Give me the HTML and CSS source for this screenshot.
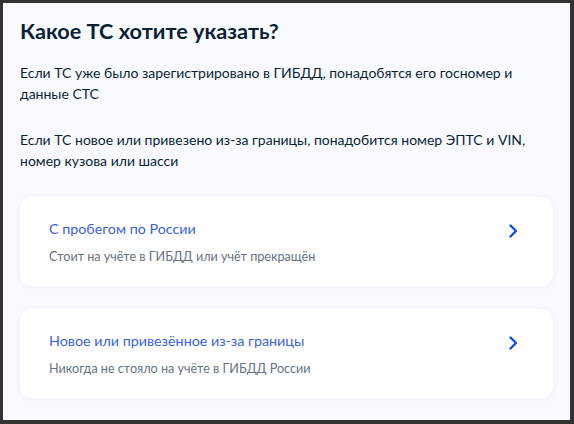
FILE: index.html
```html
<!DOCTYPE html>
<html lang="ru">
<head>
<meta charset="utf-8">
<link rel="stylesheet" href="styles.css">
</head>
<body>
<div class="frame">
  <h1 class="title">Какое ТС хотите указать?</h1>
  <p class="text">Если ТС уже было зарегистрировано в ГИБДД, понадобятся его госномер и данные СТС</p>
  <p class="text second">Если ТС новое или привезено из-за границы, понадобится номер ЭПТС и VIN, номер кузова или шасси</p>
  <div class="cards">
    <a class="card" href="#">
      <div class="card-body">
        <div class="card-title">С пробегом по России</div>
        <div class="card-sub">Стоит на учёте в ГИБДД или учёт прекращён</div>
      </div>
      <svg class="chev" width="10" height="16" viewBox="0 0 10 16"><path d="M2.5 2.5l5.5 5.5-5.5 5.5" fill="none" stroke="#0d4cd3" stroke-width="2.4" stroke-linecap="round" stroke-linejoin="round"/></svg>
    </a>
    <a class="card" href="#">
      <div class="card-body">
        <div class="card-title">Новое или привезённое из-за границы</div>
        <div class="card-sub">Никогда не стояло на учёте в ГИБДД России</div>
      </div>
      <svg class="chev" width="10" height="16" viewBox="0 0 10 16"><path d="M2.5 2.5l5.5 5.5-5.5 5.5" fill="none" stroke="#0d4cd3" stroke-width="2.4" stroke-linecap="round" stroke-linejoin="round"/></svg>
    </a>
  </div>
</div>
</body>
</html>
```
FILE: styles.css
```css
* { box-sizing: border-box; }
html, body { margin: 0; padding: 0; }
body {
  width: 574px;
  height: 424px;
  overflow: hidden;
  font-family: Lato, "Noto Sans", sans-serif;
  color: #0b1f33;
}
.frame {
  width: 574px;
  height: 424px;
  background: #f8faff;
  border-style: solid;
  border-color: #333;
  border-width: 3px 4px 4px 3px;
  padding: 14px 17px 0 17px;
  overflow: hidden;
}
.title {
  margin: 0;
  font-size: 21.7px;
  line-height: 28px;
  font-weight: 700;
  color: #0b1f33;
}
.text {
  margin: 17px 0 0 0;
  font-size: 14px;
  line-height: 21px;
  color: #0b1f33;
}
.text.second { margin-top: 25px; }
.cards {
  margin-top: 26px;
  display: flex;
  flex-direction: column;
  gap: 23px;
}
.card {
  display: flex;
  align-items: flex-start;
  justify-content: space-between;
  background: #fff;
  border-radius: 12px;
  box-shadow: 0 1px 6px rgba(30, 60, 130, 0.06);
  padding: 22px 35px 22px 29px;
  height: 89px;
  text-decoration: none;
}
.card-title {
  font-size: 14.3px;
  line-height: 20px;
  color: #3b5fd9;
}
.card-sub {
  margin-top: 10px;
  font-size: 12.6px;
  line-height: 16px;
  color: #66727f;
}
.chev { margin-top: 4px; }
```
